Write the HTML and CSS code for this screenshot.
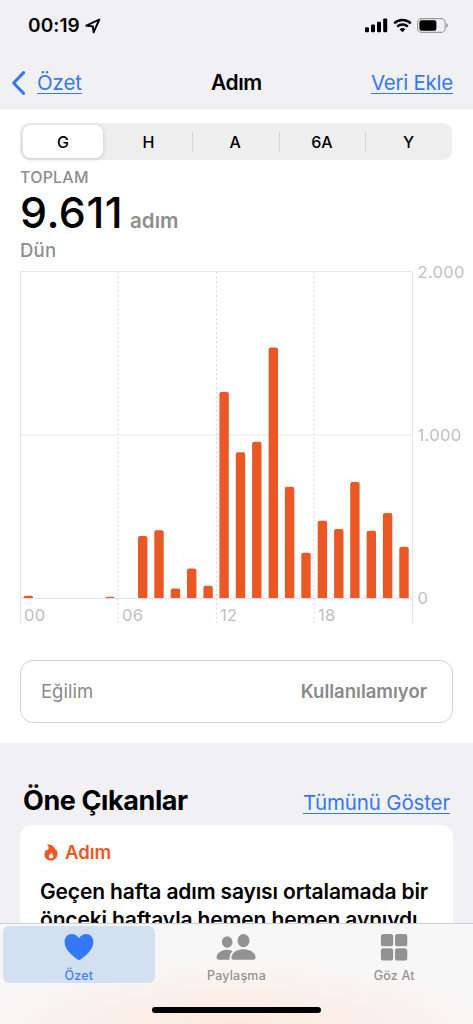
FILE: index.html
```html
<!DOCTYPE html>
<html lang="tr">
<head>
    <meta charset="UTF-8">
    <meta name="viewport" content="width=device-width, initial-scale=1.0">
    <title>Adım</title>
    <link rel="stylesheet" href="styles.css">
</head>
<body>
    <header>
        <div class="status-bar">
            <div class="clock">
                <span class="time">00:19</span>
                <svg width="16" height="16" viewBox="0 0 16 16"><path d="M1.3 7.7 L14.3 1.5 L8.6 14.3 L7.8 8.2 Z" fill="none" stroke="#000" stroke-width="1.9" stroke-linejoin="round"/></svg>
            </div>
            <div class="status-icons">
                <svg width="23" height="15" viewBox="0 0 23 15">
                    <rect x="0" y="9.3" width="4" height="5" rx="1.2"/>
                    <rect x="6" y="6.5" width="4" height="7.8" rx="1.2"/>
                    <rect x="12" y="3.7" width="4" height="10.6" rx="1.2"/>
                    <rect x="18.2" y="0.4" width="4" height="13.9" rx="1.2"/>
                </svg>
                <svg width="19" height="15" viewBox="0 0 19 15">
                    <path d="M1.2 5.3 A12 12 0 0 1 17.8 5.3 M4.2 8.6 A7.7 7.7 0 0 1 14.8 8.6" fill="none" stroke="#000" stroke-width="2.5"/>
                    <path d="M9.5 14.3 L6.6 11.3 A4.2 4.2 0 0 1 12.4 11.3 Z"/>
                </svg>
                <svg width="31" height="15" viewBox="0 0 31 15">
                    <rect x="0.6" y="0.6" width="27.6" height="13.8" rx="4" fill="none" stroke="#9b9b9e" stroke-width="1.1"/>
                    <rect x="2.4" y="2.2" width="17" height="10.6" rx="2.2"/>
                    <path d="M29.3 5.2 Q31 5.8 31 7.5 Q31 9.2 29.3 9.8 Z" fill="#9b9b9e"/>
                </svg>
            </div>
        </div>
        <nav class="nav-bar">
            <a class="back" href="#">
                <svg width="15" height="26" viewBox="0 0 15 26"><path d="M12.6 2.6 L2.6 13 L12.6 23.4" fill="none" stroke="#3478f6" stroke-width="3" stroke-linecap="round" stroke-linejoin="round"/></svg>
                <span class="link">Özet</span>
            </a>
            <h1>Adım</h1>
            <a class="link add" href="#">Veri Ekle</a>
        </nav>
    </header>

    <main>
        <section class="steps">
            <div class="segments">
                <button class="segment active">G</button>
                <button class="segment">H</button>
                <button class="segment">A</button>
                <button class="segment">6A</button>
                <button class="segment">Y</button>
            </div>
            <div class="summary">
                <div class="caption">TOPLAM</div>
                <div class="total"><span class="value">9.611</span><span class="unit">adım</span></div>
                <div class="day">Dün</div>
            </div>

            <!-- hourly steps, 0 is at y=328 and 2.000 at y=1 -->
            <svg class="chart" width="453" height="356" viewBox="0 0 453 356">
                <g class="grid">
                    <path d="M0.5 353 V1.5 H392.5 V353"/>
                    <path d="M0.5 165 H392.5"/>
                    <path class="base" d="M0.5 328.3 H392.5"/>
                </g>
                <g class="grid dotted">
                    <path d="M98 2 V353"/>
                    <path d="M196.5 2 V353"/>
                    <path d="M294 2 V353"/>
                </g>
                <g class="bars">
                    <path d="M3.7 328 v-0.5 q0 -1.7 1.7 -1.7 h5.9 q1.7 0 1.7 1.7 v0.5 z"/>
                    <path d="M85.4 328 q0 -1.3 1.5 -1.3 h6 q1.5 0 1.5 1.3 z"/>
                    <path d="M118 328 V268 q0 -2 2 -2 h5.4 q2 0 2 2 V328 z"/>
                    <path d="M134.3 328 V262.2 q0 -2 2 -2 h5.4 q2 0 2 2 V328 z"/>
                    <path d="M150.7 328 V320.5 q0 -2 2 -2 h5.4 q2 0 2 2 V328 z"/>
                    <path d="M167 328 V300.4 q0 -2 2 -2 h5.4 q2 0 2 2 V328 z"/>
                    <path d="M183.4 328 V317.7 q0 -2 2 -2 h5.4 q2 0 2 2 V328 z"/>
                    <path d="M199.4 328 V124 q0 -2 2 -2 h5.4 q2 0 2 2 V328 z"/>
                    <path d="M215.8 328 V184.2 q0 -2 2 -2 h5.4 q2 0 2 2 V328 z"/>
                    <path d="M232.1 328 V173.8 q0 -2 2 -2 h5.4 q2 0 2 2 V328 z"/>
                    <path d="M248.6 328 V79.5 q0 -2 2 -2 h5.4 q2 0 2 2 V328 z"/>
                    <path d="M264.9 328 V218.7 q0 -2 2 -2 h5.4 q2 0 2 2 V328 z"/>
                    <path d="M281.3 328 V284.8 q0 -2 2 -2 h5.4 q2 0 2 2 V328 z"/>
                    <path d="M297.7 328 V252.8 q0 -2 2 -2 h5.4 q2 0 2 2 V328 z"/>
                    <path d="M314.1 328 V261 q0 -2 2 -2 h5.4 q2 0 2 2 V328 z"/>
                    <path d="M330.2 328 V214 q0 -2 2 -2 h5.4 q2 0 2 2 V328 z"/>
                    <path d="M346.6 328 V262.8 q0 -2 2 -2 h5.4 q2 0 2 2 V328 z"/>
                    <path d="M362.9 328 V245 q0 -2 2 -2 h5.4 q2 0 2 2 V328 z"/>
                    <path d="M379.3 328 V278.8 q0 -2 2 -2 h5.4 q2 0 2 2 V328 z"/>
                </g>
                <g class="axis">
                    <text x="397.5" y="7.5">2.000</text>
                    <text x="397.5" y="171">1.000</text>
                    <text x="397.5" y="334.3">0</text>
                    <text x="4" y="350.5">00</text>
                    <text x="102" y="350.5">06</text>
                    <text x="200" y="350.5">12</text>
                    <text x="298" y="350.5">18</text>
                </g>
            </svg>

            <div class="trend">
                <span>Eğilim</span>
                <span class="trend-value">Kullanılamıyor</span>
            </div>
        </section>

        <section class="highlights">
            <div class="highlights-head">
                <h2>Öne Çıkanlar</h2>
                <a class="link all" href="#">Tümünü Göster</a>
            </div>
            <article class="card">
                <div class="card-label">
                    <svg width="14" height="17" viewBox="0 0 14 17">
                        <path fill-rule="evenodd" d="M3 0.2 C8 0.3 11.2 3 11.4 6.4 Q11.8 5.8 11.6 4.8 C13 6.4 13.6 8.2 13.5 10.3 C13.3 14 10.5 16.6 7 16.6 C3.2 16.6 0.5 14.2 0.5 10.8 C0.5 8.3 1.3 6.8 2.4 5.5 Q2.9 6.3 3.8 6.5 C5.2 4.4 4.8 2 3 0.2 Z M7.4 8.4 C7.4 10.2 4.9 10.6 4.9 12.4 C4.9 13.6 5.8 14.3 7 14.3 C8.4 14.3 9.4 13.4 9.4 12.2 Q9.4 11.3 9 10.7 Q8.8 11.2 8.4 11.4 Q8.7 9.6 7.4 8.4 Z" fill="#eb5826"/>
                    </svg>
                    <span>Adım</span>
                </div>
                <p>Geçen hafta adım sayısı ortalamada bir<br>önceki haftayla hemen hemen aynıydı.</p>
            </article>
        </section>
    </main>

    <footer class="tab-bar">
        <div class="tabs">
            <a class="tab active" href="#">
                <svg width="30" height="28" viewBox="0 0 30 28"><path d="M15 27.2 C11 25 0.6 17.6 0.6 9 C0.6 4.4 3.7 1 7.8 1 C11 1 13.6 2.7 15 5.3 C16.4 2.7 19 1 22.2 1 C26.3 1 29.4 4.4 29.4 9 C29.4 17.6 19 25 15 27.2 Z"/></svg>
                <span>Özet</span>
            </a>
            <a class="tab" href="#">
                <svg width="40" height="28" viewBox="0 0 40 28">
                    <ellipse cx="11.2" cy="9" rx="5.3" ry="5.8"/>
                    <path d="M0.6 24.8 C0.6 20.5 4.8 16.8 10.8 16.8 Q14.2 16.8 16.6 18.2 C14.4 20 13.2 22.4 13.6 26.8 H2.6 Q0.6 26.8 0.6 24.8 Z"/>
                    <ellipse cx="27.5" cy="7.7" rx="6" ry="6.6"/>
                    <path d="M15.4 24.6 C15.4 20.4 20.2 16.3 27.5 16.3 C34.8 16.3 39.6 20.4 39.6 24.6 Q39.6 26.8 37.2 26.8 H17.6 Q15.4 26.8 15.4 24.6 Z"/>
                </svg>
                <span>Paylaşma</span>
            </a>
            <a class="tab" href="#">
                <svg width="28" height="28" viewBox="0 0 28 28">
                    <rect x="0.9" y="1" width="12.3" height="12.3" rx="2.6"/>
                    <rect x="15" y="1" width="12.3" height="12.3" rx="2.6"/>
                    <rect x="0.9" y="15.2" width="12.3" height="12.3" rx="2.6"/>
                    <rect x="15" y="15.2" width="12.3" height="12.3" rx="2.6"/>
                </svg>
                <span>Göz At</span>
            </a>
        </div>
        <div class="home-indicator"></div>
    </footer>
</body>
</html>
```
FILE: styles.css
```css
/* General styles */
* {
    box-sizing: border-box;
}

body {
    font-family: Inter, "Liberation Sans", sans-serif;
    margin: 0;
    height: 1024px;
    overflow: hidden;
    background-color: #f0f0f5;
    color: #000;
}

svg {
    display: block;
    flex-shrink: 0;
}

a {
    color: #3478f6;
    text-decoration: none;
}

.link {
    font-size: 20.5px;
    text-decoration: underline;
    text-decoration-thickness: 1.3px;
    text-underline-offset: 3px;
}

/* Header styles */
header {
    height: 109px;
    background-color: #f0f0f5;
}

.status-bar {
    height: 51px;
    padding: 0 25px 0 28px;
    display: flex;
    align-items: center;
    justify-content: space-between;
}

.clock {
    display: flex;
    align-items: center;
    gap: 5px;
}

.time {
    font-size: 19px;
    font-weight: 600;
    letter-spacing: 0.1px;
}

.status-icons {
    display: flex;
    gap: 5px;
}

.nav-bar {
    height: 58px;
    padding: 5px 20px 0 11px;
    display: grid;
    grid-template-columns: 200px 1fr auto;
    align-items: center;
}

.back {
    display: flex;
    align-items: center;
    gap: 11px;
}

.back .link {
    letter-spacing: -0.1px;
}

h1 {
    margin: 0;
    font-size: 21px;
    font-weight: 600;
    letter-spacing: -0.4px;
}

.add {
    letter-spacing: -0.25px;
}

/* Steps section */
.steps {
    height: 634px;
    padding: 14px 20px 0;
    background-color: #fff;
}

.segments {
    height: 37px;
    margin-right: 1px;
    padding: 2px 0;
    border-radius: 9px;
    background-color: #eee;
    display: grid;
    grid-template-columns: 85px repeat(4, 1fr);
}

.segment {
    position: relative;
    border: none;
    background: none;
    padding: 0;
    font: 500 16px Inter, "Liberation Sans", sans-serif;
    color: #000;
}

.segment.active {
    margin: 0 2px 0 3px;
    border-radius: 8px;
    background-color: #fff;
    box-shadow: 0 1px 5px rgba(0, 0, 0, 0.15);
}

.segment:nth-child(n+3)::before {
    content: "";
    position: absolute;
    left: 0;
    top: 7px;
    width: 1px;
    height: 20px;
    background-color: #d6d6d6;
}

.summary {
    height: 110px;
    padding-top: 7px;
    color: #8e8e8e;
}

.caption {
    font-size: 16px;
    font-weight: 500;
    line-height: 20px;
    letter-spacing: 0.2px;
}

.total {
    height: 52px;
    line-height: 51px;
    display: flex;
    align-items: baseline;
    gap: 7px;
}

.value {
    font-size: 43px;
    font-weight: 500;
    letter-spacing: 0.5px;
    color: #000;
}

.unit {
    font-size: 20.5px;
    font-weight: 600;
}

.day {
    font-size: 18.5px;
    font-weight: 500;
    line-height: 22px;
    letter-spacing: 0.2px;
}

/* Chart */
.chart {
    overflow: visible;
}

.grid path {
    fill: none;
    stroke: #e6e6e6;
    stroke-width: 1;
}

.grid .base {
    stroke: #dedede;
}

.dotted path {
    stroke: #d8d8d8;
    stroke-dasharray: 2 2.6;
}

.bars path {
    fill: #eb5826;
}

.axis text {
    font-size: 16.5px;
    fill: #bfbfbf;
    letter-spacing: 0.35px;
}

/* Trend box */
.trend {
    height: 63px;
    margin-top: 34px;
    padding: 0 25px 1px 20px;
    border: 1px solid #d2d2d2;
    border-radius: 13px;
    display: flex;
    align-items: center;
    justify-content: space-between;
    font-size: 18.5px;
    color: #8a8a8a;
}

.trend-value {
    font-weight: 600;
}

/* Highlights */
.highlights {
    padding: 39px 20px 0;
}

.highlights-head {
    height: 43px;
    padding: 0 3px;
    display: flex;
    align-items: baseline;
    justify-content: space-between;
}

h2 {
    margin: 0;
    font-size: 27px;
    line-height: 38px;
    font-weight: 700;
    letter-spacing: -0.4px;
}

.all {
    letter-spacing: -0.15px;
}

.card {
    height: 240px;
    padding: 15px 20px;
    border-radius: 12px;
    background-color: #fff;
}

.card-label {
    padding-left: 4px;
    display: flex;
    align-items: center;
    gap: 7px;
    font-size: 18.5px;
    font-weight: 600;
    line-height: 24px;
    color: #eb5826;
}

.card p {
    margin: 14px 0 0;
    font-size: 21px;
    font-weight: 600;
    line-height: 28px;
    letter-spacing: -0.14px;
    white-space: nowrap;
}

.tab-bar {
    position: fixed;
    left: 0;
    right: 0;
    bottom: 0;
    height: 101px;
    border-top: 1px solid #cfcfcf;
    background: radial-gradient(ellipse 260px 70px at 50% 105%, #fde8dc, rgba(253, 232, 220, 0)), #f8f7f7;
}

.tabs {
    height: 61px;
    padding-top: 2px;
    display: grid;
    grid-template-columns: repeat(3, 1fr);
}

.tab {
    margin: 0 3px;
    padding-top: 7px;
    height: 57px;
    border-radius: 6px;
    display: flex;
    flex-direction: column;
    align-items: center;
    gap: 7px;
    font-size: 12.5px;
    font-weight: 500;
    line-height: 16px;
    letter-spacing: 0.2px;
    color: #929292;
    fill: #929292;
}

.tab.active {
    background-color: #d3e0f2;
    color: #3f80f5;
    fill: #3478f6;
}

.home-indicator {
    width: 169px;
    height: 6px;
    margin: 22px auto 0;
    border-radius: 3px;
    background-color: #000;
}
```
